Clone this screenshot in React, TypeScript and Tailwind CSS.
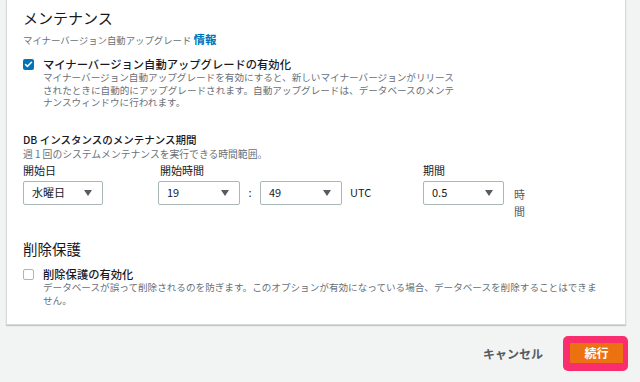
import { Check } from 'lucide-react'

const font = { fontFamily: '"Noto Sans CJK JP", "Noto Sans", sans-serif' }

function Checkbox({ checked }: { checked?: boolean }) {
  if (checked) {
    return (
      <span className="mt-[2px] flex h-[11px] w-[11px] shrink-0 items-center justify-center rounded-[2px] bg-[#0073bb]">
        <Check className="h-[9px] w-[9px] text-white" strokeWidth={4} />
      </span>
    )
  }
  return <span className="mt-[2px] h-[11px] w-[11px] shrink-0 rounded-[2px] border border-[#aab7b8] bg-white" />
}

function Select({ value, width }: { value: string; width: string }) {
  return (
    <div
      className={`flex h-[24px] items-center justify-between rounded-[2px] border border-[#aab7b8] bg-white pl-[8px] pr-[10px] text-[11px] text-[#16191f] ${width}`}
    >
      <span>{value}</span>
      <svg width="8" height="6" viewBox="0 0 8 6">
        <path d="M0 0 H8 L4 6 Z" fill="#545b64" />
      </svg>
    </div>
  )
}

export default function App() {
  return (
    <div className="h-[382px] w-[640px] overflow-hidden bg-[#f2f3f3]" style={font}>
      <div className="ml-[6px] h-[325px] w-[620px] border border-t-0 border-[#d5dbdb] bg-white pl-[16px] shadow-[0_1px_1px_rgba(0,28,36,0.2)]">
        <h2 className="pt-[6px] text-[15px] leading-[24px] text-[#16191f]">メンテナンス</h2>
        <p className="mt-[2px] text-[9.4px] leading-[14px] text-[#687078]">
          マイナーバージョン自動アップグレード <span className="text-[11.5px] font-bold text-[#0073bb]">情報</span>
        </p>

        <div className="mt-[10px] flex gap-[9px]">
          <Checkbox checked />
          <div>
            <p className="text-[11.3px] font-medium leading-[14px] text-[#16191f]">
              マイナーバージョン自動アップグレードの有効化
            </p>
            <p className="w-[416px] text-[9.6px] leading-[12.5px] text-[#687078]">
              マイナーバージョン自動アップグレードを有効にすると、新しいマイナーバージョンがリリースされたときに自動的にアップグレードされます。自動アップグレードは、データベースのメンテナンスウィンドウに行われます。
            </p>
          </div>
        </div>

        <p className="mt-[23px] text-[10.5px] font-medium leading-[16px] text-[#16191f]">
          DB インスタンスのメンテナンス期間
        </p>
        <p className="text-[9.8px] leading-[12px] text-[#687078]">週 1 回のシステムメンテナンスを実行できる時間範囲。</p>

        <div className="mt-[2px] flex items-start">
          <div className="w-[135px]">
            <p className="mb-[3px] text-[11px] leading-[16px] text-[#16191f]">開始日</p>
            <Select value="水曜日" width="w-[80px]" />
          </div>
          <div className="w-[265px]">
            <p className="mb-[3px] pl-[2px] text-[11px] leading-[16px] text-[#16191f]">開始時間</p>
            <div className="flex items-center">
              <Select value="19" width="w-[82px]" />
              <span className="w-[20px] text-center text-[11px] text-[#16191f]">:</span>
              <Select value="49" width="w-[82px]" />
              <span className="ml-[8px] text-[11px] text-[#16191f]">UTC</span>
            </div>
          </div>
          <div>
            <p className="mb-[3px] text-[11px] leading-[16px] text-[#16191f]">期間</p>
            <div className="flex items-start">
              <Select value="0.5" width="w-[81px]" />
              <span className="ml-[10px] mt-[5px] w-[11px] text-[11px] leading-[17px] text-[#545b64]">時間</span>
            </div>
          </div>
        </div>

        <h2 className="mt-[17px] text-[14.5px] leading-[24px] text-[#16191f]">削除保護</h2>
        <div className="mt-[6px] flex gap-[9px]">
          <Checkbox />
          <div>
            <p className="text-[11.3px] font-medium leading-[14px] text-[#16191f]">削除保護の有効化</p>
            <p className="w-[558px] text-[9.6px] leading-[13px] text-[#687078]">
              データベースが誤って削除されるのを防ぎます。このオプションが有効になっている場合、データベースを削除することはできません。
            </p>
          </div>
        </div>
      </div>

      <div className="mr-[12px] mt-[11px] flex items-center justify-end gap-[20px]">
        <span className="text-[12px] font-bold text-[#545b64]">キャンセル</span>
        <div className="rounded-[5px] bg-[#fa2d6e] pb-[8px] pl-[7px] pr-[5px] pt-[7px]">
          <div className="flex h-[20px] w-[53px] items-center justify-center bg-[#ec7211] text-[12px] font-bold text-white">
            続行
          </div>
        </div>
      </div>
    </div>
  )
}
